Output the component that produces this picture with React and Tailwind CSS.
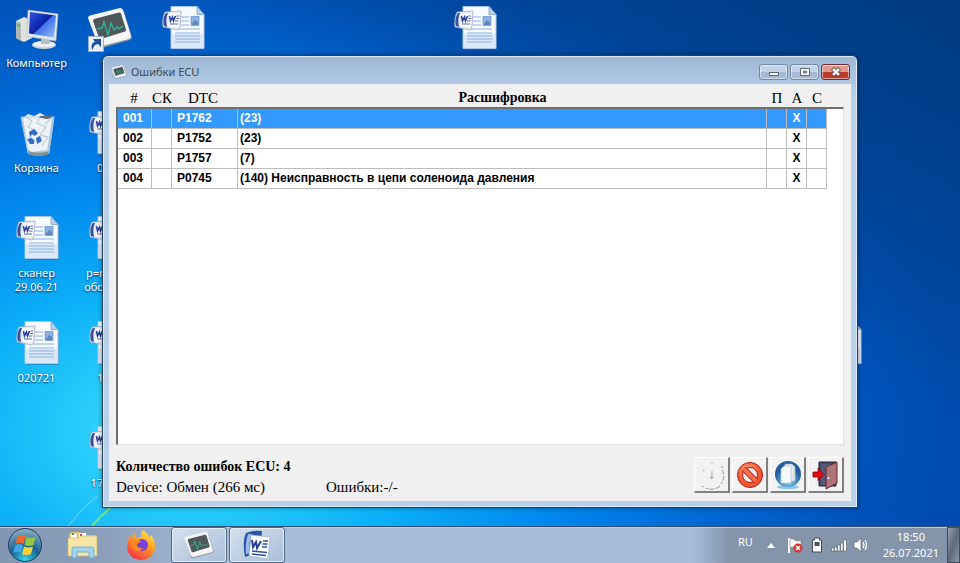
import { useState } from "react";

const CELL_W = 73;
const CELL_H = 105;

// Desktop shortcuts, addressed by icon grid column and row
const SHORTCUTS = [
  { col: 0, row: 0, icon: "computer", label: ["Компьютер"] },
  { col: 1, row: 0, icon: "scanner", label: ["tcu"] },
  { col: 2, row: 0, icon: "doc", label: [] },
  { col: 6, row: 0, icon: "doc", label: [] },
  { col: 0, row: 1, icon: "bin", label: ["Корзина"] },
  { col: 1, row: 1, icon: "doc", label: ["0107"] },
  { col: 0, row: 2, icon: "doc", label: ["сканер", "29.06.21"] },
  { col: 1, row: 2, icon: "doc", label: ["p=rabota", "оборотов"] },
  { col: 0, row: 3, icon: "doc", label: ["020721"] },
  { col: 1, row: 3, icon: "doc", label: ["1207"] },
  { col: 1, row: 4, icon: "doc", label: ["170721"] },
  { col: 11, row: 3, icon: "doc", label: [] },
];

const ERRORS = [
  { id: "001", dtc: "P1762", text: "(23)" },
  { id: "002", dtc: "P1752", text: "(23)" },
  { id: "003", dtc: "P1757", text: "(7)" },
  { id: "004", dtc: "P0745", text: "(140) Неисправность в цепи соленоида давления" },
];

function WordDocIcon() {
  return (
    <svg viewBox="0 0 48 48" className="size-12">
      <path d="M13 3h26l7 8v35H13z" fill="#2b62ac" opacity=".45" />
      <path d="M12 2.500h26l7 8V44.500H12z" fill="#f6faff" stroke="#a9c4e8" />
      <path d="M13 30h31v14H13z" fill="#dbe8f8" />
      <path d="M38 2.500v8h7z" fill="#b9cfec" stroke="#7f9fcc" strokeWidth=".8" />
      <path d="M22 13h8M22 17h8M22 21h8M16 25h25M16 29h25M16 32h25M16 35h25M16 38h25" stroke="#8cb0dd" strokeWidth="1.200" />
      <rect x="32" y="12.500" width="8" height="9" fill="#8db1e2" stroke="#5c85c2" strokeWidth=".6" />
      <path d="M33 20l3-4 3 2v3h-6z" fill="#5d87c4" />
      <path d="M6 8l16-1 -1 16 -2 3-15-3c-1-6 0-11 2-15z" fill="#e7ebf5" stroke="#9aa6c6" strokeWidth=".7" />
      <path d="M7 9c-3 4-3 9-2 13l3 1c-1-5-1-10 1-14z" fill="#3b4f9c" />
      <path d="M10.500 9.500h10l-1 13.500-10-1z" fill="#fff" />
      <path d="M10.500 12l1 5 2-4 1 4 2-5" fill="none" stroke="#28409a" strokeWidth="1.600" />
      <path d="M17.500 12h2.500M17.500 14.500h2.500M16 17h3.500M11 20h8" stroke="#5263a7" strokeWidth="1.200" />
    </svg>
  );
}

function ComputerIcon() {
  return (
    <svg viewBox="0 0 48 48" className="size-12">
      <defs>
        <linearGradient id="screen" x1="0" x2="1" y1="0" y2="1">
          <stop offset="0" stopColor="#3358e0" />
          <stop offset=".5" stopColor="#0a1fa8" />
          <stop offset=".52" stopColor="#3f6fe8" />
          <stop offset="1" stopColor="#9cc4fa" />
        </linearGradient>
      </defs>
      <path d="M3 17l8-4 8 3v18l-8 4-8-4z" fill="#dfe2e0" />
      <path d="M3 17l5 2v18l-5-3z" fill="#aeb7b4" />
      <path d="M4 20l3 1v2l-3-1z" fill="#3fbf4b" />
      <ellipse cx="31" cy="41" rx="12" ry="4" fill="#cdd3d6" />
      <ellipse cx="31" cy="40" rx="11" ry="3" fill="#f0f2f2" />
      <path d="M28 33h8l1 7h-9z" fill="#b9bfc2" />
      <path d="M15 6l30 4-2 27-29-4.500z" fill="#e4e7e8" stroke="#b2b9bd" strokeWidth=".6" />
      <path d="M17 8l26 3.500-2 22-25-4z" fill="url(#screen)" />
    </svg>
  );
}

function RecycleBinIcon() {
  return (
    <svg viewBox="0 0 48 48" className="size-12">
      <path d="M8 8h33l-5 36c-5 3-17 3-21 0z" fill="#c8d9e8" opacity=".85" />
      <path d="M10 9l5-4 6 2 6-3 6 3 6 2-1 8-4 24-15 2-4-3z" fill="#edf2f6" />
      <path d="M13 8l6 4-4 6 7 3-5 7 6 5M28 6l-4 8 9 4-6 8 8 2-6 9M38 10l-6 5" fill="none" stroke="#c3ced9" strokeWidth="1.300" />
      <path d="M16 23l5-3 4 4-3 3-3-2-2 3zM14 30l3 5 4 0v-4l-3-2zM24 35l5-3-2-5-4 2z" fill="#2f6bc8" />
      <path d="M8 8h33l-5 36c-5 3-17 3-21 0z" fill="none" stroke="#b4c9dc" />
      <path d="M26 8c4-2 9-2 13 0-2 3-9 2-13 0z" fill="#5f6b72" />
      <path d="M15 42c5 2 16 2 21 0l-1 3c-5 2-15 2-19 0z" fill="#8a8f8c" />
    </svg>
  );
}

function ScannerIcon({ className }) {
  return (
    <svg viewBox="0 0 48 48" className={className}>
      <path d="M4 13L35 6q2 0 3 2l8 25q0 2-2 3L16 44q-3 0-4-2L3 16z" fill="#8e9498" />
      <path d="M4 11.500L34 4q2 0 3 2l8 26q0 2-2 3L16 42q-3 0-4-2L2 14q0-2 2-2.500z" fill="#f4f5f5" />
      <path d="M8 15l25-6.500q2 0 2 1l5 16q0 2-1 2l-24 7.500q-2 0-2-1L7 17z" fill="#50575a" />
      <path d="M11 25l5-1 2-6 4 13 3-12 3 7 3-3 2 2 4-3" fill="none" stroke="#35b698" strokeWidth="1.300" />
    </svg>
  );
}

function ShortcutArrow() {
  return (
    <svg viewBox="0 0 16 16" className="absolute bottom-0 left-0.5 size-4">
      <path d="M.5.500h15v15H.5z" fill="#e9f0f8" stroke="#9ab0cc" />
      <path d="M5 14c-3-3-1-8 2-8L5 3h8v8l-3-3c-3 0-5 3-5 6z" fill="#1f4f94" />
    </svg>
  );
}

function Shortcut({ item }) {
  return (
    <button
      className="absolute flex w-[73px] flex-col items-center pt-1 text-center text-[11px] leading-[14px] text-white [text-shadow:0_1px_2px_#00244f]"
      style={{ left: item.col * CELL_W, top: item.row * CELL_H }}
    >
      <span className="relative">
        {item.icon === "computer" && <ComputerIcon />}
        {item.icon === "bin" && <RecycleBinIcon />}
        {item.icon === "doc" && <WordDocIcon />}
        {item.icon === "scanner" && (
          <>
            <ScannerIcon className="size-12" />
            <ShortcutArrow />
          </>
        )}
      </span>
      <span className="mt-1">
        {item.label.map((line) => (
          <span key={line} className="block">{line}</span>
        ))}
      </span>
    </button>
  );
}

function CaptionButton({ label, danger, children }) {
  return (
    <button
      aria-label={label}
      className={`flex h-4 w-[29px] items-center justify-center rounded-[3px] border shadow-[inset_0_0_0_1px_#ffffff80] ${
        danger
          ? "border-[#6b3038] bg-linear-to-b from-[#dc9a90] from-50% to-[#bd3c2c] to-50%"
          : "border-[#7488a3] bg-linear-to-b from-[#c3d3e7] from-50% to-[#a5bad5] to-50%"
      }`}
    >
      {children}
    </button>
  );
}

function TitleBar() {
  return (
    <div className="flex h-7 items-center gap-1 pt-1 pr-px pl-0.5">
      <ScannerIcon className="size-4" />
      <h1 className="grow text-[11px] leading-4 text-[#3b4754]">Ошибки ECU</h1>
      <div className="flex gap-0.5">
        <CaptionButton label="Свернуть">
          <svg viewBox="0 0 12 10" className="h-2.5 w-3">
            <rect x="1.500" y="5.500" width="9" height="3" fill="#fff" stroke="#5c6673" />
          </svg>
        </CaptionButton>
        <CaptionButton label="Развернуть">
          <svg viewBox="0 0 12 10" className="h-2.5 w-3">
            <path d="M1.500 1.500h9v7h-9z" fill="#fff" stroke="#5c6673" />
            <path d="M4.500 4h3v2h-3z" fill="#a5bad5" stroke="#5c6673" />
          </svg>
        </CaptionButton>
        <CaptionButton label="Закрыть" danger>
          <svg viewBox="0 0 12 10" className="h-2.5 w-3">
            <path d="M2.500 1.500l7 7M9.500 1.500l-7 7" stroke="#5d3538" strokeWidth="4" />
            <path d="M3 2l6 6M9 2L3 8" stroke="#fff" strokeWidth="2.500" />
          </svg>
        </CaptionButton>
      </div>
    </div>
  );
}

function ErrorTable() {
  const [selected, setSelected] = useState("001");

  return (
    <div className="flex min-h-0 grow flex-col">
      <div className="mr-[17px] grid grid-cols-[36px_20px_66px_1fr_20px_20px_20px] pt-1.5 pb-px text-center font-['Liberation_Serif',serif] text-[15px] leading-4">
        <span>#</span>
        <span className="flex justify-center">СК</span>
        <span className="pr-1">DTC</span>
        <span className="text-[14px] font-bold">Расшифровка</span>
        <span>П</span>
        <span>А</span>
        <span>С</span>
      </div>
      <div className="grow border-t-2 border-r border-b border-l-2 border-t-[#6f6f6f] border-r-[#e0e0e0] border-b-[#e0e0e0] border-l-[#6f6f6f] bg-white pr-4">
        <table aria-label="Ошибки ECU" className="w-full table-fixed border-separate border-spacing-0 font-['Liberation_Sans',sans-serif] text-[12px] leading-[19px] font-bold">
          <colgroup>
            <col className="w-[34px]" />
            <col className="w-5" />
            <col className="w-[66px]" />
            <col />
            <col className="w-5" />
            <col className="w-5" />
            <col className="w-5" />
          </colgroup>
          <tbody className="[&_td]:border-r [&_td]:border-b [&_td]:border-[#bdbdbd] [&_td]:p-0">
            {ERRORS.map((e) => (
              <tr
                key={e.id}
                onClick={() => setSelected(e.id)}
                className={selected === e.id ? "bg-[#3399ff] text-white" : "text-black"}
              >
                <td><span className="pl-[5px]">{e.id}</span></td>
                <td />
                <td><span className="pl-[5px]">{e.dtc}</span></td>
                <td><span className="pl-0.5">{e.text}</span></td>
                <td />
                <td className="text-center">X</td>
                <td />
              </tr>
            ))}
          </tbody>
        </table>
      </div>
    </div>
  );
}

function ToolButton({ label, disabled, children }) {
  return (
    <button
      aria-label={label}
      disabled={disabled}
      className="flex size-9 items-center justify-center border-t border-r-2 border-b-2 border-l border-t-white border-r-[#808080] border-b-[#808080] border-l-white bg-[#f2f2f2]"
    >
      {children}
    </button>
  );
}

function ToolButtons() {
  return (
    <div className="flex gap-0.5">
      <ToolButton label="Таймер" disabled>
        <svg viewBox="0 0 32 32" className="size-8" fill="none">
          <path d="M26 12a12 12 0 0 1-1 14M24 28a12 12 0 0 1-14 2" stroke="#fff" strokeWidth="2" />
          <path d="M26 11a12 12 0 0 1-1 14M24 27a12 12 0 0 1-14 2" stroke="#aaa" strokeWidth="1.300" strokeDasharray="5 1" />
          <path d="M16 12v8M15 17v3M17 18v1M16 4v1M25 7l2 2M7 12l1-1M6 27l2 1" stroke="#b5b5b5" strokeWidth="1.300" />
        </svg>
      </ToolButton>
      <ToolButton label="Стереть ошибки">
        <svg viewBox="0 0 32 32" className="size-8">
          <defs>
            <radialGradient id="stop" cx=".4" cy=".3">
              <stop offset="0" stopColor="#ff9b72" />
              <stop offset="1" stopColor="#f5542f" />
            </radialGradient>
          </defs>
          <circle cx="16" cy="16" r="12.500" fill="url(#stop)" stroke="#a51f16" />
          <circle cx="16" cy="16" r="7.500" fill="#f3eeee" stroke="#a51f16" />
          <path d="M10 10l12 12" stroke="#a51f16" strokeWidth="6" />
          <path d="M10 10l12 12" stroke="#fb6f48" strokeWidth="4" />
        </svg>
      </ToolButton>
      <ToolButton label="Копировать">
        <svg viewBox="0 0 32 32" className="size-8">
          <defs>
            <radialGradient id="copy" cx=".5" cy=".75">
              <stop offset="0" stopColor="#8fe0fb" />
              <stop offset="1" stopColor="#235f9f" />
            </radialGradient>
          </defs>
          <ellipse cx="16" cy="28" rx="11" ry="2" fill="#8ec4e8" />
          <circle cx="16" cy="15" r="13" fill="url(#copy)" />
          <path d="M13 5h7l3 3v14H13z" fill="#dfe6ec" stroke="#a9b8c6" strokeWidth=".6" />
          <path d="M9 10l3-3h7v17H9z" fill="#f6f8fa" stroke="#b4c2ce" strokeWidth=".6" />
        </svg>
      </ToolButton>
      <ToolButton label="Выход">
        <svg viewBox="0 0 32 32" className="size-8">
          <path d="M9 3h17v24H9z" fill="#454962" stroke="#23233a" />
          <path d="M11 5h13v21H11z" fill="#555b7c" />
          <path d="M16 8l11-5v21l-11 6z" fill="#ad7377" stroke="#5b2b32" />
          <circle cx="18.500" cy="19" r="1.500" fill="#fff" stroke="#555" strokeWidth=".5" />
          <path d="M3 13h5v-4l6 6.500-6 6V18H3z" fill="#e30a12" stroke="#6e0508" strokeWidth=".7" />
        </svg>
      </ToolButton>
    </div>
  );
}

function EcuWindow() {
  return (
    <section className="absolute inset-x-[102px] top-[55px] bottom-[18px] flex flex-col rounded-t-[6px] border border-[#23415f] bg-linear-to-b from-[#9db7d4] to-[#b9d0ea] to-[40px] px-1.5 pb-1.5 shadow-[inset_0_0_0_1px_#dbe8f5,0_0_5px_#00000066]">
      <TitleBar />
      <div className="flex min-h-0 grow flex-col bg-[#f0f0f0] px-[7px] text-black">
        <ErrorTable />
        <footer className="flex items-start justify-between pt-3 pb-1 font-['Liberation_Serif',serif] text-[15px] leading-5">
          <div>
            <p className="text-[14px] font-bold">Количество ошибок ECU: 4</p>
            <p className="flex">
              <span className="w-[210px]">Device: Обмен (266 мс)</span>
              <span>Ошибки:-/-</span>
            </p>
          </div>
          <ToolButtons />
        </footer>
      </div>
    </section>
  );
}

function StartOrb() {
  return (
    <svg viewBox="0 0 36 36" className="size-9">
      <defs>
        <radialGradient id="orb" cx=".5" cy=".95" r=".9">
          <stop offset="0" stopColor="#35d4ee" />
          <stop offset=".5" stopColor="#17628e" />
          <stop offset="1" stopColor="#86a9c2" />
        </radialGradient>
      </defs>
      <circle cx="18" cy="18" r="16.500" fill="url(#orb)" stroke="#1c3e5c" />
      <path d="M10.500 9.500q4-2.500 8-.5l-2 8q-4-2-8 0z" fill="#ee6a2c" />
      <path d="M19.500 10q4 2 9 0l-2 8q-5 2-9 0z" fill="#93c83e" />
      <path d="M8 18.500q4-2.500 8-.5l-2 8q-4-2-8 0z" fill="#42a6e6" />
      <path d="M17 19.500q4 2 9 0l-2 7.500q-5 2-9 0z" fill="#fccf3a" />
    </svg>
  );
}

function ExplorerIcon() {
  return (
    <svg viewBox="0 0 32 32" className="size-8">
      <path d="M2 6l2-3h8l2 3h15v20H2z" fill="#e2c571" />
      <path d="M4 5h6v4H4zM12 4h7v5h-7z" fill="#fff" />
      <path d="M5 4h2v2H5z" fill="#42a44a" />
      <path d="M13 5h2v2h-2z" fill="#d9453d" />
      <path d="M19 7h2v2h-2z" fill="#3f83d1" />
      <path d="M1 9h11l2-2h16v20H1z" fill="#f6e6a6" stroke="#d4b45e" strokeWidth=".6" />
      <path d="M5 29v-9q0-2 2-2h18q2 0 2 2v9h-5v-6H10v6z" fill="#9fd3ef" stroke="#5fa4cf" strokeWidth=".8" />
    </svg>
  );
}

function FirefoxIcon() {
  return (
    <svg viewBox="0 0 32 32" className="size-8">
      <defs>
        <linearGradient id="fox" x1=".8" x2=".2" y1="0" y2="1">
          <stop offset="0" stopColor="#fff04a" />
          <stop offset=".45" stopColor="#ff9722" />
          <stop offset="1" stopColor="#f5284f" />
        </linearGradient>
      </defs>
      <path d="M18 1c3 2 5 4 6 7 1 0 2-1 2-2 3 4 4 7 4 12a14 13 0 0 1-28 0c0-5 1-8 4-12l1 3 3-5 1 5c2-1 4-1 5-1 0-3 0-5 2-7z" fill="url(#fox)" />
      <circle cx="17" cy="16" r="6" fill="#7a40d8" />
      <path d="M6 11c4-2 7 0 10 1-1 2-4 2-4 4s3 4 6 3c-2 4-9 4-11-1z" fill="#ff8a20" />
    </svg>
  );
}

function WordIcon() {
  return (
    <svg viewBox="0 0 32 32" className="size-8">
      <path d="M5 4q6-3 16-2l-2 24q-8-1-15 2-3-16 1-24z" fill="#2b56a4" />
      <path d="M7 5q-3 9-2 20l4-1q-2-10 2-19z" fill="#9dbbea" />
      <path d="M10 6l19 2-2 22-19-3z" fill="#fff" stroke="#8fa3c8" strokeWidth=".6" />
      <path d="M11 11l1 7 3-5 1 6 4-7" fill="none" stroke="#233f92" strokeWidth="2" />
      <path d="M22 12h5M21.500 15h5M21 18h5M11 22l15 1.500M11 25l14 1.500" stroke="#2c4d9e" strokeWidth="1.500" />
    </svg>
  );
}

function TaskButton({ label, active, children }) {
  return (
    <button
      aria-label={label}
      className={`flex h-full w-14 items-center justify-center ${
        active ? "rounded-[3px] border border-[#4f6783] bg-linear-to-br from-[#d5e1ef] to-[#a9bed8] shadow-[inset_0_0_0_1px_#e6eef8]" : ""
      }`}
    >
      {children}
    </button>
  );
}

function Tray() {
  return (
    <div className="flex items-center text-[11px] leading-4 text-white">
      <span className="mr-3.5 pb-1.5">RU</span>
      <div className="flex items-center gap-1.5">
        <svg viewBox="0 0 8 5" className="mr-1.5 h-[5px] w-2"><path d="M4 0l4 5H0z" fill="#fff" /></svg>
        <svg viewBox="0 0 16 16" className="size-4">
          <path d="M2 1v15" stroke="#fff" strokeWidth="2" />
          <path d="M3 2q3-1 5 1t6 0v8q-3 2-6 0t-5 0z" fill="#f7f7f7" stroke="#5c6572" strokeWidth=".5" />
          <circle cx="11" cy="11" r="4.500" fill="#d7322b" />
          <path d="M9 9l4 4M13 9l-4 4" stroke="#fff" strokeWidth="1.500" />
        </svg>
        <svg viewBox="0 0 16 16" className="size-4">
          <path d="M5.500 1h5v2h2v12h-9V3h2z" fill="#fff" stroke="#3f4a57" />
          <path d="M5.500 5h5v4h-5z" fill="#465160" />
        </svg>
        <svg viewBox="0 0 16 16" className="size-4">
          <path d="M.5 11h2.500v3H.5zM3.500 10h2.500v4H3.500zM6.500 8h2.500v6H6.500zM9.500 6h2.500v8H9.500zM12.500 3h3v11h-3z" fill="#fff" stroke="#4f5a68" strokeWidth=".6" />
        </svg>
        <svg viewBox="0 0 16 16" className="size-4">
          <path d="M1 5h3l4-4v14l-4-4H1z" fill="#fff" stroke="#4f5a68" strokeWidth=".6" />
          <path d="M10 5q2 3 0 6M12 3q3 5 0 10" fill="none" stroke="#fff" strokeWidth="1.200" />
        </svg>
      </div>
      <time className="mr-2 ml-3.5 text-center" dateTime="2021-07-26T18:50">
        18:50
        <br />
        26.07.2021
      </time>
      <button aria-label="Свернуть все окна" className="h-full w-[13px] border border-[#3e4b5c] bg-linear-to-br from-[#94a0ae] via-[#5f6b7b] to-[#8d9bad]" />
    </div>
  );
}

export default function App() {
  return (
    <div className="flex h-screen flex-col overflow-hidden bg-[#0055bd] font-['Noto_Sans',sans-serif]">
      <main className="relative grow overflow-hidden bg-[radial-gradient(ellipse_760px_500px_at_20%_82%,#40dcfa_0%,#28ccfa_15%,#0cb0f8_30%,#0088ee_50%,#0068d4_70%,#0052b8_90%,#004cae_100%)]">
        <div className="absolute inset-0 bg-linear-to-tr from-transparent from-60% to-[#003a7c]" />
        <svg viewBox="0 0 60 30" className="absolute bottom-0 left-[65px] h-[30px] w-[60px]" fill="none">
          <path d="M3 30Q15 14 32 0" stroke="#8fe6f5" opacity=".7" />
          <path d="M27 30Q36 19 50 8" stroke="#77e08a" strokeWidth="2" />
        </svg>
        {SHORTCUTS.map((item) => (
          <Shortcut key={`${item.col}-${item.row}`} item={item} />
        ))}
        <EcuWindow />
      </main>
      <nav className="flex h-[37px] shrink-0 justify-between border-t border-[#35506e] bg-[linear-gradient(to_right,#8497b2_0%,#8a9db9_10%,#a6bedb_24%,#a6bedb_72%,#8394ab_76%)] shadow-[inset_0_1px_0_#b9cbe0]">
        <div className="flex items-center gap-0.5">
          <button aria-label="Пуск" className="mr-2.5 ml-[7px]"><StartOrb /></button>
          <TaskButton label="Проводник"><ExplorerIcon /></TaskButton>
          <TaskButton label="Firefox"><FirefoxIcon /></TaskButton>
          <TaskButton label="Сканер" active><ScannerIcon className="size-8" /></TaskButton>
          <TaskButton label="Word" active><WordIcon /></TaskButton>
        </div>
        <Tray />
      </nav>
    </div>
  );
}
